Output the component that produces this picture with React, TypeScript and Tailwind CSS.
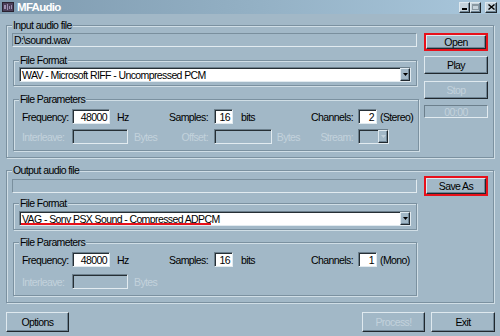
import React from "react";

const raised =
  "border border-t-[#dfe9ef] border-l-[#dfe9ef] border-r-[#20282e] border-b-[#20282e] shadow-[inset_-1px_-1px_0_#6f8595]";
const sunken =
  "border border-t-[#6c7f8c] border-l-[#6c7f8c] border-r-[#e2ebf0] border-b-[#e2ebf0] shadow-[inset_1px_1px_0_#262f35]";
const off = "text-[#c3d2dc]";

const Group = ({
  title,
  className,
  children,
}: {
  title: string;
  className?: string;
  children: React.ReactNode;
}) => (
  <fieldset
    className={
      "border border-[#7b91a0] shadow-[inset_1px_1px_0_#d0dee6,1px_1px_0_#d0dee6] px-[5px] " +
      (className || "")
    }
  >
    <legend className="px-[1px] leading-[12px] bg-[#a2b8c7]">{title}</legend>
    {children}
  </fieldset>
);

const Btn = ({
  label,
  disabled,
  className,
}: {
  label: string;
  disabled?: boolean;
  className?: string;
}) => (
  <div
    className={
      raised +
      " flex items-center justify-center bg-[#a2b8c7] " +
      (disabled ? off : "text-black") +
      " " +
      (className || "")
    }
  >
    {label}
  </div>
);

const Arrow = ({ color }: { color: string }) => (
  <svg width="5" height="3" viewBox="0 0 5 3">
    <path d="M0 0h5L2.5 3z" fill={color} />
  </svg>
);

const Select = ({ value, mark }: { value: string; mark?: boolean }) => (
  <div className={sunken + " relative h-[15px] bg-white flex items-center pl-[1px]"}>
    <span className="flex-1 leading-[12px] pl-[1px]">{value}</span>
    <div
      className={
        raised + " w-[10px] h-[13px] flex items-center justify-center bg-[#a2b8c7]"
      }
    >
      <Arrow color="#000" />
    </div>
    {mark && (
      <div className="absolute left-[1px] bottom-[0px] w-[190px] h-[2px] bg-[#e8101a]" />
    )}
  </div>
);

const Input = ({
  value,
  width,
  disabled,
}: {
  value?: string;
  width: string;
  disabled?: boolean;
}) => (
  <div
    className={
      sunken +
      " h-[15px] flex items-center justify-end pr-[2px] " +
      width +
      (disabled ? " bg-[#a2b8c7]" : " bg-white")
    }
  >
    {value}
  </div>
);

const Params = ({
  channels,
  mode,
  full,
  className,
}: {
  channels: string;
  mode: string;
  full?: boolean;
  className?: string;
}) => (
  <Group title="File Parameters" className={"ml-[1px] w-[404px] " + (className || "")}>
    <div className="grid grid-cols-[53px_88px_54px_86px_58px_1fr] items-center">
      <span className="pl-[3px]">Frequency:</span>
      <div className="flex items-center">
        <Input value="48000" width="w-[38px]" />
        <span className="ml-[7px]">Hz</span>
      </div>
      <span className="text-right pr-[6px]">Samples:</span>
      <div className="flex items-center">
        <Input value="16" width="w-[19px]" />
        <span className="ml-[8px]">bits</span>
      </div>
      <span className="text-right pr-[5px]">Channels:</span>
      <div className="flex items-center">
        <Input value={channels} width="w-[19px]" />
        <span className="ml-[3px]">{mode}</span>
      </div>
    </div>
    <div
      className={
        "grid grid-cols-[53px_88px_54px_86px_58px_1fr] items-center " +
        (full ? "mt-[5px]" : "mt-[7px]")
      }
    >
      <span className={"pl-[3px] " + off}>Interleave:</span>
      <div className="flex items-center">
        <Input width="w-[56px]" disabled />
        <span className={"ml-[6px] " + off}>Bytes</span>
      </div>
      {full && (
        <>
          <span className={"text-right pr-[6px] " + off}>Offset:</span>
          <div className="flex items-center">
            <Input width="w-[58px]" disabled />
            <span className={"ml-[5px] " + off}>Bytes</span>
          </div>
          <span className={"text-right pr-[5px] " + off}>Stream:</span>
          <div className={sunken + " w-[31px] h-[15px] flex justify-end items-center bg-[#a2b8c7]"}>
            <div className={raised + " w-[10px] h-[13px] flex items-center justify-center"}>
              <Arrow color="#c3d2dc" />
            </div>
          </div>
        </>
      )}
    </div>
  </Group>
);

const App = () => {
  return (
    <div className="w-[500px] h-[336px] bg-[#a2b8c7] overflow-hidden font-['Liberation_Sans',Arial,sans-serif] text-[10.5px] tracking-[-0.6px] text-black leading-[12px]">
      {/* title bar */}
      <div className="h-[14px] flex items-center bg-gradient-to-r from-[#7f9bb0] via-[#93b0c4] to-[#a9c7dc]">
        <svg width="12" height="10" viewBox="0 0 12 10" className="ml-[2px]">
          <rect width="12" height="10" fill="#2a2230" />
          <rect x="1" y="1" width="10" height="8" fill="#4c3f5a" />
          <path d="M2 3h2v4H2zM5 2h1v6H5zM7 4h1v3H7zM9 3h1v4H9z" fill="#9c8fb0" />
        </svg>
        <span className="ml-[3px] font-bold text-[11.5px] tracking-[-0.7px] text-white">MFAudio</span>
        <div className="ml-auto mr-[3px] flex items-center">
          <div className={raised + " w-[11px] h-[11px] bg-[#c6d3dc] flex items-end justify-center pb-[2px]"}>
            <div className="w-[5px] h-[2px] bg-black" />
          </div>
          <div className={raised + " w-[11px] h-[11px] bg-[#c6d3dc] flex items-center justify-center"}>
            <div className="w-[7px] h-[6px] border border-[#8a98a2] border-t-2" />
          </div>
          <div className={raised + " ml-[4px] w-[12px] h-[11px] bg-[#c6d3dc] flex items-center justify-center"}>
            <svg width="7" height="6" viewBox="0 0 7 6">
              <path d="M0.5 0.5L6.5 5.5M6.5 0.5L0.5 5.5" stroke="#000" strokeWidth="1.4" />
            </svg>
          </div>
        </div>
      </div>

      {/* input */}
      <Group title="Input audio file" className="ml-[6px] mt-[5px] w-[488px] pt-[2px] pb-[6px]">
        <div className="flex gap-[7px]">
          <div className="w-[405px] flex flex-col">
            <div className={sunken + " h-[14px] flex items-center pl-[1px] shadow-none border-t-[#7a8f9d] border-l-[#7a8f9d]"}>
              D:\sound.wav
            </div>
            <Group title="File Format" className="ml-[1px] w-[404px] mt-[7px] pt-[1px] pb-[3px]">
              <Select value="WAV - Microsoft RIFF - Uncompressed PCM" />
            </Group>
            <Params channels="2" mode="(Stereo)" full className="mt-[7px] pt-[4px] pb-[6px]" />
          </div>
          <div className="w-[64px] flex flex-col">
            <div className="h-[18px] border-2 border-[#e8101a] flex">
              <Btn label="Open" className="flex-1" />
            </div>
            <Btn label="Play" className="h-[18px] mt-[5px]" />
            <Btn label="Stop" disabled className="h-[18px] mt-[7px]" />
            <div className={sunken + " shadow-none h-[13px] mt-[6px] flex items-center justify-center " + off}>
              00:00
            </div>
          </div>
        </div>
      </Group>

      {/* output */}
      <Group title="Output audio file" className="ml-[6px] mt-[6px] w-[488px] pb-[6px]">
        <div className="flex gap-[7px]">
          <div className="w-[405px] flex flex-col">
            <div className={sunken + " shadow-none h-[14px] mt-[3px] border-t-[#7a8f9d] border-l-[#7a8f9d]"} />
            <Group title="File Format" className="ml-[1px] w-[404px] mt-[4px] pt-[2px] pb-[3px]">
              <Select value="VAG - Sony PSX Sound - Compressed ADPCM" mark />
            </Group>
            <Params channels="1" mode="(Mono)" className="mt-[6px] pt-[4px] pb-[6px]" />
          </div>
          <div className="w-[64px] flex flex-col">
            <div className="h-[20px] border-2 border-[#e8101a] flex">
              <Btn label="Save As" className="flex-1" />
            </div>
          </div>
        </div>
      </Group>

      {/* bottom buttons */}
      <div className="flex mt-[9px] px-[6px] pr-[5px]">
        <Btn label="Options" className="w-[63px] h-[20px]" />
        <Btn label="Process!" disabled className="ml-auto w-[63px] h-[20px]" />
        <Btn label="Exit" className="ml-[6px] w-[64px] h-[20px]" />
      </div>
    </div>
  );
};

export default App;
